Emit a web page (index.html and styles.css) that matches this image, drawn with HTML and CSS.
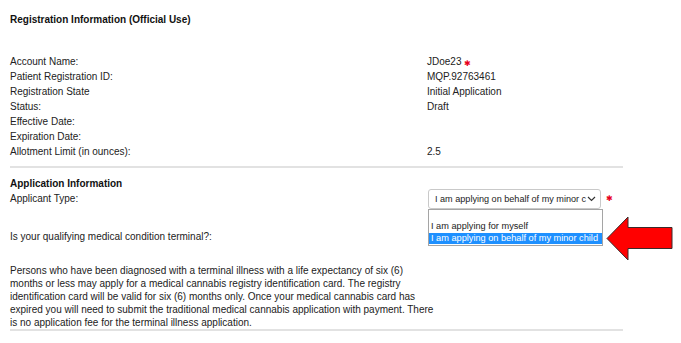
FILE: index.html
```html
<!DOCTYPE html>
<html lang="en">
<head>
    <meta charset="UTF-8">
    <title>Registration Information</title>
    <link rel="stylesheet" href="styles.css">
</head>
<body>
    <div class="form">
        <h3 class="section-title first">Registration Information (Official Use)</h3>

        <div class="rows">
            <div class="row"><span>Account Name:</span><span>JDoe23 <span class="req">✱</span></span></div>
            <div class="row"><span>Patient Registration ID:</span><span>MQP.92763461</span></div>
            <div class="row"><span>Registration State</span><span>Initial Application</span></div>
            <div class="row"><span>Status:</span><span>Draft</span></div>
            <div class="row"><span>Effective Date:</span><span></span></div>
            <div class="row"><span>Expiration Date:</span><span></span></div>
            <div class="row"><span>Allotment Limit (in ounces):</span><span>2.5</span></div>
        </div>

        <hr>

        <h3 class="section-title">Application Information</h3>
        <div class="row select-row">
            <span>Applicant Type:</span>
            <div class="field">
                <div class="select">
                    <span>I am applying on behalf of my minor c</span>
                    <svg class="chevron" width="9" height="6" viewBox="0 0 9 6"><path d="M1 1 L4.5 4.5 L8 1" fill="none" stroke="#333" stroke-width="1.2"/></svg>
                </div>
                <span class="req">✱</span>
                <ul class="options">
                    <li>&nbsp;</li>
                    <li>I am applying for myself</li>
                    <li class="selected">I am applying on behalf of my minor child</li>
                </ul>
                <svg class="pointer" width="68" height="47" viewBox="0 0 68 47">
                    <path d="M1 23.5 L22 2 L22 12.5 L66 12.5 L66 33.5 L22 33.5 L22 45 Z" fill="#ff0000" stroke="#3a2a2a" stroke-width="1"/>
                </svg>
            </div>
        </div>

        <div class="row question"><span>Is your qualifying medical condition terminal?:</span><span></span></div>

        <p class="note">Persons who have been diagnosed with a terminal illness with a life expectancy of six (6) months or less may apply for a medical cannabis registry identification card. The registry identification card will be valid for six (6) months only. Once your medical cannabis card has expired you will need to submit the traditional medical cannabis application with payment. There is no application fee for the terminal illness application.</p>

        <hr class="last">
    </div>
</body>
</html>
```

FILE: styles.css
```css
body {
    margin: 0;
    background: #fff;
    font-family: "Liberation Sans", Arial, sans-serif;
    font-size: 10px;
    color: #222;
}
.form {
    width: 613px;
    padding: 12px 0 0 10px;
}
.section-title {
    margin: 0;
    font-size: 10px;
    font-weight: bold;
    line-height: 15px;
    color: #111;
}
.rows {
    margin-top: 27px;
}
.row {
    display: grid;
    grid-template-columns: 417px 1fr;
    height: 15px;
    line-height: 15px;
}
.req {
    color: #e8001c;
    font-size: 8px;
    line-height: 1;
    vertical-align: -1px;
}
hr {
    border: none;
    border-top: 2px solid #e2e2e2;
    margin: 7px 0 8px;
}
hr.last {
    margin-top: 0;
}
.select-row {
    align-items: start;
}
.field {
    position: relative;
    display: flex;
    align-items: center;
    gap: 5px;
    margin-top: -2px;
}
.select {
    width: 161px;
    height: 18px;
    padding: 0 4px 0 6px;
    border: 1px solid #c9c9c9;
    border-radius: 3px;
    display: flex;
    align-items: center;
    justify-content: space-between;
    color: #222;
    font-size: 9.1px;
    margin-left: 1px;
}
.select span {
    white-space: nowrap;
}
.chevron {
    flex: none;
}
.options {
    position: absolute;
    left: 1px;
    top: 20px;
    width: 173px;
    margin: 0;
    padding: 1px 0;
    list-style: none;
    border: 1px solid #a5a5a5;
    background: #fff;
    font-size: 9.2px;
    z-index: 2;
}
.options li {
    line-height: 11.5px;
    padding: 0 2px;
    white-space: nowrap;
}
.options li:first-child {
    line-height: 10px;
}
.options li.selected {
    background: #1e90ff;
    color: #fff;
}
.pointer {
    position: absolute;
    left: 179px;
    top: 26px;
    z-index: 3;
}
.question {
    margin-top: 23px;
}
.note {
    margin: 20px 0 0;
    width: 424px;
    line-height: 13px;
}
```
